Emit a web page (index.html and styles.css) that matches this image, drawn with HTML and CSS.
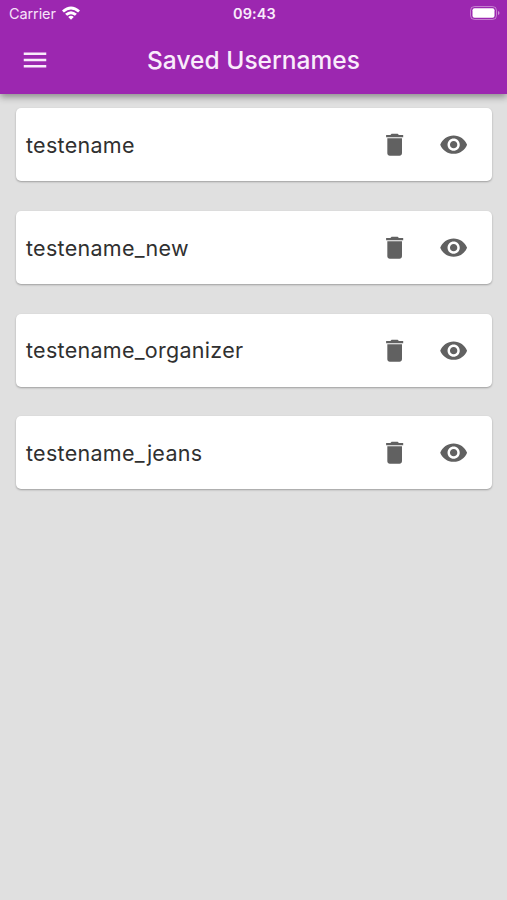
FILE: index.html
```html
<!DOCTYPE html>
<html lang="en">
<head>
<meta charset="utf-8">
<title>Saved Usernames</title>
<link rel="stylesheet" href="styles.css">
</head>
<body>
<svg class="defs" width="0" height="0">
  <symbol id="trash" viewBox="0 0 24 24"><path d="M6 19c0 1.100.9 2 2 2h8c1.100 0 2-.9 2-2V6.700H6V19zM19 4h-3.500l-1-1h-5l-1 1H5v1.900h14V4z"/></symbol>
  <symbol id="eye" viewBox="0 0 24 24"><path d="M12 4.500C7 4.500 2.730 7.610 1 12c1.730 4.390 6 7.500 11 7.500s9.270-3.110 11-7.500c-1.730-4.390-6-7.500-11-7.500zM12 17c-2.760 0-5-2.240-5-5s2.240-5 5-5 5 2.240 5 5-2.240 5-5 5zm0-8c-1.660 0-3 1.340-3 3s1.340 3 3 3 3-1.340 3-3-1.340-3-3-3z"/></symbol>
</svg>
<header class="header">
  <div class="status">
    <div class="carrier"><span>Carrier</span>
      <svg class="wifi" viewBox="0 0 18 14"><path d="M0 4.600Q9-3.600 18 4.600L16.100 6.600Q9 .2 1.900 6.600ZM3.100 7.800Q9 2.600 14.900 7.800L12.900 9.800Q9 6.500 5.100 9.800ZM6.200 10.900Q9 8.700 11.800 10.900L9 13.700Z"/></svg>
    </div>
    <div class="time">09:43</div>
    <svg class="battery" viewBox="0 0 30 14"><rect class="shell" x=".5" y=".5" width="26" height="13" rx="4"/><rect x="2.500" y="2.300" width="22" height="9.400" rx="2"/><path class="tip" d="M28 5v4q1.500-.5 1.500-2T28 5z"/></svg>
  </div>
  <div class="bar">
    <svg class="menu" viewBox="0 0 24 24"><path d="M3 18h18v-2H3v2zm0-5h18v-2H3v2zm0-7v2h18V6H3z"/></svg>
    <h1 class="title">Saved Usernames</h1>
  </div>
</header>
<main class="list">
  <article class="card"><span class="name">testename</span><svg class="icon"><use href="#trash"/></svg><svg class="icon"><use href="#eye"/></svg></article>
  <article class="card"><span class="name">testename_new</span><svg class="icon"><use href="#trash"/></svg><svg class="icon"><use href="#eye"/></svg></article>
  <article class="card"><span class="name">testename_organizer</span><svg class="icon"><use href="#trash"/></svg><svg class="icon"><use href="#eye"/></svg></article>
  <article class="card"><span class="name">testename_jeans</span><svg class="icon"><use href="#trash"/></svg><svg class="icon"><use href="#eye"/></svg></article>
</main>
</body>
</html>
```
FILE: styles.css
```css
* { box-sizing: border-box; }
body { margin: 0; min-height: 900px; background: #e0e0e0; font-family: Inter, sans-serif; color: #303030; }
.defs { display: block; height: 0; }
.header { height: 93.600px; background: #9c27b0; color: #fff; box-shadow: 0 3px 7px rgba(0,0,0,.38); }
.status { height: 27px; display: grid; grid-template-columns: 1fr auto 1fr; align-items: center; padding: 0 7px 0 9px; font-size: 14.500px; }
.carrier { display: flex; align-items: center; gap: 6px; color: #f6e3f9; letter-spacing: -.1px; }
.wifi { width: 18px; height: 14px; fill: #fff; margin-top: -1px; }
.time { font-weight: 600; letter-spacing: .1px; color: #f9ecfb; }
.battery { width: 30px; height: 14px; fill: #fff; justify-self: end; margin-top: -1px; }
.shell { fill: none; stroke: #fff; stroke-opacity: .4; }
.tip { fill-opacity: .5; }
.bar { height: 66px; display: grid; grid-template-columns: 70px 1fr 70px; align-items: center; }
.menu { width: 30px; height: 30px; margin-left: 20px; fill: #f9ecfb; }
.title { margin: 0; text-align: center; font-size: 24.500px; font-weight: 450; letter-spacing: .03px; color: #f9ecfb; white-space: nowrap; }
.list { padding: 14.900px 15px 0 15.500px; display: grid; gap: 29.600px; }
.card { height: 73px; display: flex; align-items: center; padding: 0 24px 0 10.500px; background: #fff; border-radius: 5px; box-shadow: 0 1px 2px rgba(0,0,0,.3); }
.name { flex: 1; font-size: 21.500px; letter-spacing: .28px; }
.icon { width: 29.300px; height: 29.300px; fill: #616161; }
.icon + .icon { margin-left: 29.300px; }
```
